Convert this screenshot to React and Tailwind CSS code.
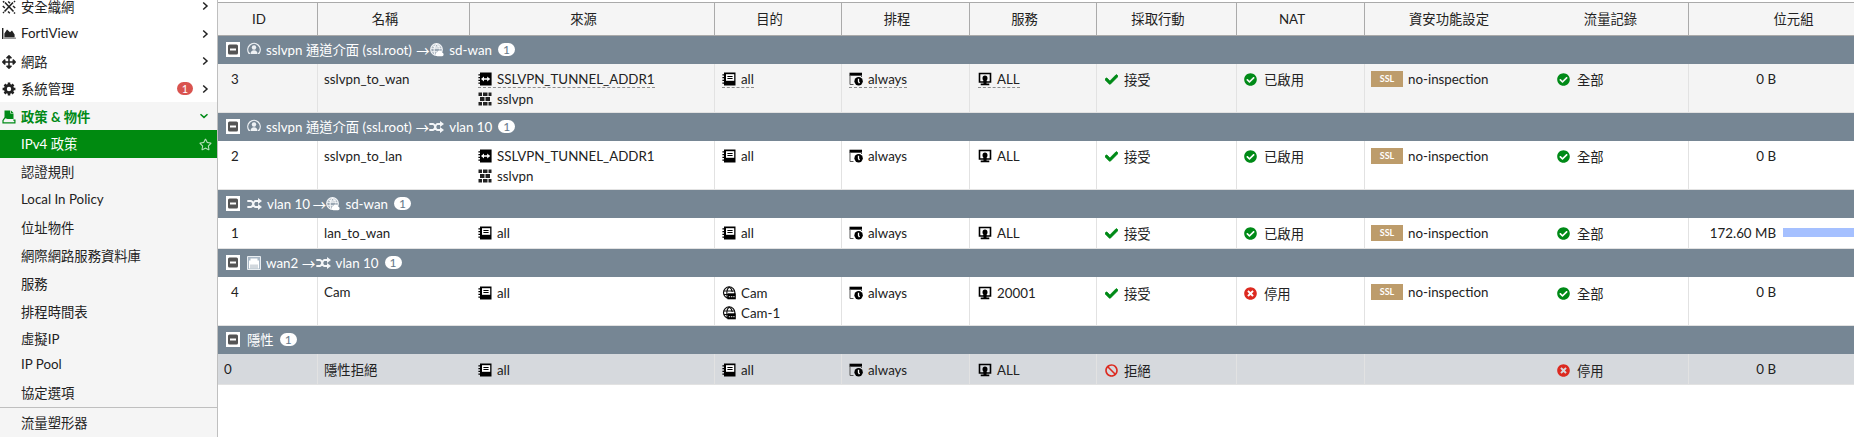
import React from "react";
import {
  FaCheck,
  FaCheckCircle,
  FaTimesCircle,
  FaBan,
  FaArrowsAlt,
  FaRegStar,
} from "react-icons/fa";

const svgProps = { viewBox: "0 0 14 14", width: 14, height: 14, className: "block shrink-0" };

/* ---------- sidebar icons ---------- */
const FabricIcon = () => (
  <svg {...svgProps} fill="none" stroke="currentColor" strokeWidth="1.6">
    <path d="M3 2.5l8.5 9M11 2.5L2.5 11.5" />
    <path d="M6.2 1.5L8 3.2M0.8 6L2.8 8M11 6l2.2 2M6 11.5l1.8 1.7M1 1.2l1.2 1.2M12 1l1 1M1 13l1-1M12 12.5l1 1" strokeWidth="1.5" />
  </svg>
);
const AreaIcon = () => (
  <svg {...svgProps}>
    <path d="M0 1h1.4v11H0z" fill="#222" />
    <path d="M2.4 10.5V6.5L5 2.5l3 2.7 2-1.6 2.6 4v2.9z" fill="#222" />
    <path d="M1.4 10.5H14V12H1.4z" fill="#999" />
  </svg>
);
const CogIcon = () => (
  <svg {...svgProps} fill="none" stroke="currentColor">
    <circle cx="7" cy="7" r="3.6" strokeWidth="2.8" />
    <path d="M7 0.6V3M0.6 7H3M2.5 2.5L4 4M11.5 2.5L10 4M7 13.4V11M13.4 7H11M11.5 11.5L10 10M2.5 11.5L4 10" strokeWidth="2.5" />
  </svg>
);
const PolicyIcon = () => (
  <svg {...svgProps}>
    <path d="M2.5 0.5h5.8v3h3.2v5.6H5.5L2.5 8z" fill="currentColor" />
    <path d="M9 0.5l2.5 2.4H9z" fill="currentColor" />
    <path d="M3 7.6L1 10.4v2.4h11.9v-2.7h-1.6" fill="none" stroke="currentColor" strokeWidth="1.2" />
  </svg>
);
const Chevron = ({ down }) => (
  <svg viewBox="0 0 10 10" width="10" height="10" className="block shrink-0" fill="none" stroke="currentColor" strokeWidth="1.5">
    {down ? <path d="M1.5 3.2L5 6.4l3.5-3.2" /> : <path d="M3.2 1.5L7 5 3.2 8.5" />}
  </svg>
);

/* ---------- table icons ---------- */
const BookIcon = () => (
  <svg {...svgProps}>
    <path d="M2 0.5h11.5v13H2z" fill="#000" />
    <path d="M0.4 2.2h2.4v1.2H0.4zM0.4 5h2.4v1.2H0.4zM0.4 7.8h2.4V9H0.4zM0.4 10.6h2.4v1.2H0.4z" fill="#000" />
    <path d="M4 2.2h8.2v6.6H4z" fill="#fff" />
    <path d="M5.4 3.9h5.2v1H5.4zM5.4 6h5.2v1H5.4z" fill="#000" />
  </svg>
);
const RangeIcon = () => (
  <svg {...svgProps}>
    <path d="M2 0.5h11.6v13H2z" fill="#000" />
    <path d="M0.4 2.2h2v1.2h-2zM0.4 5h2v1.2h-2zM0.4 7.8h2V9h-2zM0.4 10.6h2v1.2h-2z" fill="#000" />
    <path d="M3 7l3-2.6v1.9h3.2V4.4l3 2.6-3 2.6V7.8H6v1.8z" fill="#fff" />
  </svg>
);
const WallIcon = () => (
  <svg {...svgProps} fill="#222">
    <path d="M0.5 0.6H4v3.5H0.5zM5 0.6h4.5v3.5H5zM10.5 0.6h3v3.5h-3zM0.5 9.9H4v3.5H0.5zM5 9.9h4.5v3.5H5zM10.5 9.9h3v3.5h-3zM2 5h4.5v4H2zM7.5 5H12v4H7.5z" />
  </svg>
);
const ScheduleIcon = () => (
  <svg {...svgProps}>
    <path d="M0.5 0.7h12.5v3H0.5z" fill="#000" />
    <path d="M1 3v9.5h3.5" fill="none" stroke="#555" strokeWidth="1" />
    <path d="M12.5 3v2" stroke="#555" strokeWidth="1" />
    <circle cx="9.6" cy="9.3" r="4.2" fill="#000" />
    <path d="M9.5 6.8v2.7l1 1.7" fill="none" stroke="#fff" strokeWidth="1.3" />
  </svg>
);
const ServiceIcon = () => (
  <svg {...svgProps}>
    <path d="M1.5 1.5h11v8.5h-11z" fill="none" stroke="#000" strokeWidth="1.6" />
    <path d="M4.5 6.2a2.5 2.6 0 015 0c0 1.2-.5 1.9-.9 2.3v1.3h-3.2V8.5c-.4-.4-.9-1.1-.9-2.3z" fill="#000" />
    <path d="M5.5 9h3v2.5h2.8V13.2H2.7v-1.7h2.8z" fill="#000" />
  </svg>
);
const VipIcon = () => (
  <svg {...svgProps}>
    <circle cx="7.2" cy="6.6" r="5.7" fill="none" stroke="#111" strokeWidth="1.2" />
    <path d="M1.5 5h11.5M2 8.5h6M7.2 1C4.6 3 4.2 8 5.5 12M7.2 1c2 1.2 2.8 3 3 5" fill="none" stroke="#111" strokeWidth="1.1" />
    <path d="M5.5 7.3h8.3v6H5.5z" fill="#000" />
    <path d="M6.8 10h1.4v1.2H6.8zM9 10h1.4v1.2H9zM11.2 10h1.4v1.2h-1.4z" fill="#bbb" />
  </svg>
);

/* ---------- group icons ---------- */
const TunnelIcon = () => (
  <svg viewBox="0 0 14 14" width="14" height="14" className="mb-[3px] block shrink-0" fill="none" stroke="#eef1f4" strokeWidth="1.3">
    <path d="M3.2 12.3H2A6.2 6.2 0 1112 12.3H10.8" />
    <circle cx="7" cy="6.5" r="2.2" fill="#eef1f4" stroke="none" />
    <path d="M3.6 13c0-2.4 1.3-3.7 3.4-3.7s3.4 1.3 3.4 3.7z" fill="#eef1f4" stroke="none" />
  </svg>
);
const GlobeIcon = () => (
  <svg {...svgProps}>
    <circle cx="6.5" cy="6.5" r="5.8" fill="#9aa7b3" stroke="#f4f6f8" strokeWidth="1.2" />
    <path d="M1 5.2h11M1.5 8.8h6M6.5 1C3.8 3.2 3.4 8 5 12M6.5 1c2.5 1.8 3.2 3.5 3.4 5.5M2.5 2.7c2.4 1.5 5.6 1.5 8 0" fill="none" stroke="#f4f6f8" strokeWidth="1.1" />
    <path d="M7.3 13.2a2.2 2.2 0 01.1-4.3 2.6 2.6 0 014.8.6 1.9 1.9 0 01-.1 3.7z" fill="#fff" />
  </svg>
);
const PortIcon = () => (
  <svg {...svgProps}>
    <path d="M0.5 0.5h13v13H0.5z" fill="#a9b8c6" stroke="#e8edf1" />
    <path d="M2 12.5V4.5h1.5V2.5h7v2H12v8z" fill="#fff" />
    <path d="M4 8.5v4M6 8.5v4M8 8.5v4M10 8.5v4" stroke="#9aa7b3" strokeWidth="0.9" />
  </svg>
);
const Shuffle = () => (
  <svg viewBox="0 0 15 12" width="15" height="12" className="block shrink-0">
    <path d="M0.3 3h3.5C6.8 3 5.8 9 8.5 9h3M0.3 9h3.5C6.8 9 5.8 3 8.5 3h3" fill="none" stroke="#f4f6f8" strokeWidth="1.8" />
    <path d="M11 0l4 3-4 3zM11 6l4 3-4 3z" fill="#f4f6f8" />
  </svg>
);

const Collapse = () => (
  <svg viewBox="0 0 14 15" width="14" height="15" className="block shrink-0">
    <path d="M0 0h14v15H0z" fill="#fff" />
    <rect x="2" y="2.5" width="10" height="10" rx="1.5" fill="#555" />
    <path d="M4 6.5h6v2H4z" fill="#fff" />
  </svg>
);

const Arrow = ({ space = "w-[14px]" }) => (
  <span className={`shrink-0 pt-[3px] text-center font-['Noto_Sans_CJK_TC'] text-[13.33px] leading-[24px] ${space}`}>→</span>
);
const Count = () => (
  <span className="ml-[6px] flex h-[13px] w-[17px] items-center justify-center rounded-full bg-white text-[12px] leading-[13px] text-[#66788a]">
    1
  </span>
);

function Group({ children }) {
  return (
    <div className="flex h-[28px] items-center bg-[#768694] pb-px pl-[8px] whitespace-pre text-white">
      <Collapse />
      <div className="ml-[7px] flex h-[27px] items-center leading-[27px]">
        {children}
        <Count />
      </div>
    </div>
  );
}
const Label = ({ children }) => <span className="ml-[5px] pt-px">{children}</span>;

/* ---------- cells ---------- */
function Item({ icon, gap = "gap-[5px]", pad = "", under, children }) {
  return (
    <div className="flex h-[20px]">
      <span className={`flex h-[18px] items-center ${gap} ${under ? "border-b border-dashed border-[#8c8c8c]" : ""}`}>
        {icon}
        <span className={`leading-[20px] whitespace-nowrap ${pad}`}>{children}</span>
      </span>
    </div>
  );
}
const Cell = ({ className, children }) => (
  <div className={`shrink-0 border-[#e2e2e2] ${className}`}>{children}</div>
);
const Green = ({ Icon }) => <Icon className="block h-[13px] w-[13px] shrink-0 text-[#008a17]" />;
const Red = ({ Icon }) => <Icon className="block h-[13px] w-[13px] shrink-0 text-[#dc2a20]" />;
const Ssl = () => (
  <span className="flex h-[16px] w-[32px] shrink-0 items-center justify-center bg-[#bd9c6b] text-[9px] font-bold text-white">SSL</span>
);

function Row({ id, idPad = "pl-[13px]", name, src, dst, service, action, nat, ssl, log, bytes, bar, under, h, bg, top = "pt-[6px]", namePad = "pt-[5px]" }) {
  return (
    <div className={`flex overflow-hidden border-b border-[#e2e2e2] ${h} ${bg}`}>
      <Cell className={`w-[100px] border-r pt-[5px] leading-[20px] ${idPad}`}>{id}</Cell>
      <Cell className={`w-[152px] pl-[6px] leading-[20px] ${namePad}`}>{name}</Cell>
      <Cell className={`w-[245px] border-r pl-[8px] ${top}`}>{src}</Cell>
      <Cell className={`w-[127px] border-r pl-[7px] ${top}`}>{dst}</Cell>
      <Cell className={`w-[128px] border-r pl-[7px] ${top}`}>
        <Item icon={<ScheduleIcon />} under={under}>always</Item>
      </Cell>
      <Cell className={`w-[127px] border-r pl-[8px] ${top}`}>
        <Item icon={<ServiceIcon />} under={under}>{service}</Item>
      </Cell>
      <Cell className={`w-[140px] border-r pl-[8px] ${top}`}>{action}</Cell>
      <Cell className={`w-[128px] border-r pl-[7px] ${top}`}>{nat}</Cell>
      <Cell className={`w-[185px] pl-[6px] ${ssl ? "pt-[6px]" : ""}`}>
        {ssl && <Item icon={<Ssl />}>no-inspection</Item>}
      </Cell>
      <Cell className={`w-[139px] border-r pl-[7px] ${top}`}>{log}</Cell>
      <Cell className="flex w-[226px] pt-[5px] leading-[20px]">
        <span className="w-[87px] text-right">{bytes}</span>
        {bar && <span className="mt-[5px] ml-[7px] h-[9px] w-[132px] bg-[#a5c0ff]" />}
      </Cell>
    </div>
  );
}

const accept = (
  <Item icon={<FaCheck className="block h-[13px] w-[13px] shrink-0 stroke-[#008a17] text-[#008a17] [stroke-width:30]" />} gap="gap-[6px]" pad="pt-px">
    接受
  </Item>
);
const enabled = <Item icon={<Green Icon={FaCheckCircle} />} gap="gap-[7px]" pad="pt-px">已啟用</Item>;
const disabled = <Item icon={<Red Icon={FaTimesCircle} />} gap="gap-[7px]" pad="pt-px">停用</Item>;
const logAll = <Item icon={<Green Icon={FaCheckCircle} />} gap="gap-[7px]" pad="pt-px">全部</Item>;
const all = <Item icon={<BookIcon />}>all</Item>;
const allUnder = <Item icon={<BookIcon />} under>all</Item>;

const columns = [
  ["ID", "w-[100px] border-r"],
  ["名稱", "w-[152px] border-r"],
  ["來源", "w-[245px] border-r"],
  ["目的", "w-[127px] border-r"],
  ["排程", "w-[128px] border-r"],
  ["服務", "w-[127px] border-r"],
  ["採取行動", "w-[140px] border-r"],
  ["NAT", "w-[128px] border-r"],
  ["資安功能設定", "w-[185px]"],
  ["流量記錄", "w-[139px] border-r"],
  ["位元組", "w-[226px]"],
];

function Menu({ icon, label, h = "h-[28px]", pad = "pt-[3px]", extra }) {
  return (
    <div className={`flex shrink-0 items-center pr-[7px] pl-[2px] ${h}`}>
      <span className="flex w-[19px] pt-px">{icon}</span>
      <span className={`flex-1 ${pad}`}>{label}</span>
      {extra}
      <Chevron />
    </div>
  );
}
const Sub = ({ h = "h-[28px]", pad = "pt-[3px]", children }) => (
  <div className={`flex shrink-0 items-center pl-[21px] ${h} ${pad}`}>{children}</div>
);

export default function App() {
  return (
    <div className="flex h-[437px] w-[1854px] overflow-hidden bg-white font-['Lato','Noto_Sans_CJK_TC',sans-serif] text-[13.33px] text-[#222]">
      <aside className="flex w-[218px] shrink-0 flex-col overflow-hidden border-r border-[#bfbfbf]">
        <div className="-mt-[8px] flex flex-col">
          <Menu icon={<FabricIcon />} label="安全織網" />
          <Menu icon={<AreaIcon />} label="FortiView" h="h-[27px]" pad="pt-0" />
          <Menu icon={<FaArrowsAlt className="block h-[14px] w-[14px]" />} label="網路" />
          <Menu
            icon={<CogIcon />}
            label="系統管理"
            h="h-[27px]"
            extra={
              <span className="mr-[7px] flex h-[13px] w-[16px] items-center justify-center rounded-full bg-[#d9534f] text-[11px] leading-[13px] text-white">
                1
              </span>
            }
          />
        </div>
        <div className="flex h-[335px] flex-col bg-[#f5f5f5]">
          <div className="flex h-[28px] shrink-0 items-center pr-[8px] pl-[2px] font-bold text-[#008a17]">
            <span className="flex w-[19px] pt-[2px]"><PolicyIcon /></span>
            <span className="flex-1 pt-[4px]">政策 &amp; 物件</span>
            <Chevron down />
          </div>
          <div className="flex h-[28px] shrink-0 items-center justify-between bg-[#008a10] pr-[5px] pl-[21px] text-white">
            <span className="pt-[2px]">IPv4 政策</span>
            <FaRegStar className="h-[13px] w-[13px] text-[#b5e0b8]" />
          </div>
          <Sub pad="pt-px">認證規則</Sub>
          <Sub h="h-[27px]" pad="pt-0">Local In Policy</Sub>
          <Sub pad="pt-[4px]">位址物件</Sub>
          <Sub>網際網路服務資料庫</Sub>
          <Sub>服務</Sub>
          <Sub>排程時間表</Sub>
          <Sub h="h-[27px]">虛擬IP</Sub>
          <Sub h="h-[26px]" pad="pt-0">IP Pool</Sub>
          <Sub h="h-[29px]">協定選項</Sub>
          <div className="h-px shrink-0 bg-[#bfbfbf]" />
          <Sub>流量塑形器</Sub>
        </div>
      </aside>

      <main className="flex w-[1636px] flex-col overflow-hidden pt-[2px]">
        <div className="flex h-[34px] shrink-0 border-y border-[#aaa] bg-[#f5f5f5]">
          {columns.map(([label, cls]) => (
            <div key={label} className={`flex shrink-0 items-center justify-center border-[#aaa] pt-px pr-[17px] ${cls}`}>
              {label}
            </div>
          ))}
        </div>

        <Group>
          <TunnelIcon />
          <Label>sslvpn 通道介面 (ssl.root) </Label>
          <Arrow space="w-[15px]" />
          <GlobeIcon />
          <Label>sd-wan</Label>
        </Group>
        <Row
          id="3" name="sslvpn_to_wan" h="h-[49px]" bg="bg-[#f4f4f4]" under
          src={<><Item icon={<RangeIcon />} under>SSLVPN_TUNNEL_ADDR1</Item><Item icon={<WallIcon />}>sslvpn</Item></>}
          dst={allUnder} service="ALL" action={accept} nat={enabled} ssl log={logAll} bytes="0 B"
        />

        <Group>
          <TunnelIcon />
          <Label>sslvpn 通道介面 (ssl.root) </Label>
          <Arrow />
          <Shuffle />
          <Label>vlan 10</Label>
        </Group>
        <Row
          id="2" name="sslvpn_to_lan" h="h-[49px]" bg="bg-white"
          src={<><Item icon={<RangeIcon />}>SSLVPN_TUNNEL_ADDR1</Item><Item icon={<WallIcon />}>sslvpn</Item></>}
          dst={all} service="ALL" action={accept} nat={enabled} ssl log={logAll} bytes="0 B"
        />

        <Group>
          <Shuffle />
          <Label>vlan 10 </Label>
          <Arrow space="-ml-px w-[14px]" />
          <GlobeIcon />
          <Label>sd-wan</Label>
        </Group>
        <Row
          id="1" name="lan_to_wan" h="h-[31px]" bg="bg-white" src={all} dst={all}
          service="ALL" action={accept} nat={enabled} ssl log={logAll} bytes="172.60 MB" bar
        />

        <Group>
          <PortIcon />
          <Label>wan2 </Label>
          <Arrow />
          <Shuffle />
          <Label>vlan 10</Label>
        </Group>
        <Row
          id="4" name="Cam" h="h-[49px]" bg="bg-white" top="pt-[7px]" src={all}
          dst={<><Item icon={<VipIcon />}>Cam</Item><Item icon={<VipIcon />}>Cam-1</Item></>}
          service="20001" action={accept} nat={disabled} ssl log={logAll} bytes="0 B"
        />

        <Group>
          <span className="pt-px">隱性</span>
        </Group>
        <Row
          id="0" idPad="pl-[6px]" name="隱性拒絕" namePad="pt-[6px]" h="h-[31px]" bg="bg-[#d6d9dd]" top="pt-[7px]" src={all} dst={all}
          service="ALL" action={<Item icon={<Red Icon={FaBan} />} gap="gap-[6px]" pad="pt-px">拒絕</Item>} log={disabled} bytes="0 B"
        />
      </main>
    </div>
  );
}
